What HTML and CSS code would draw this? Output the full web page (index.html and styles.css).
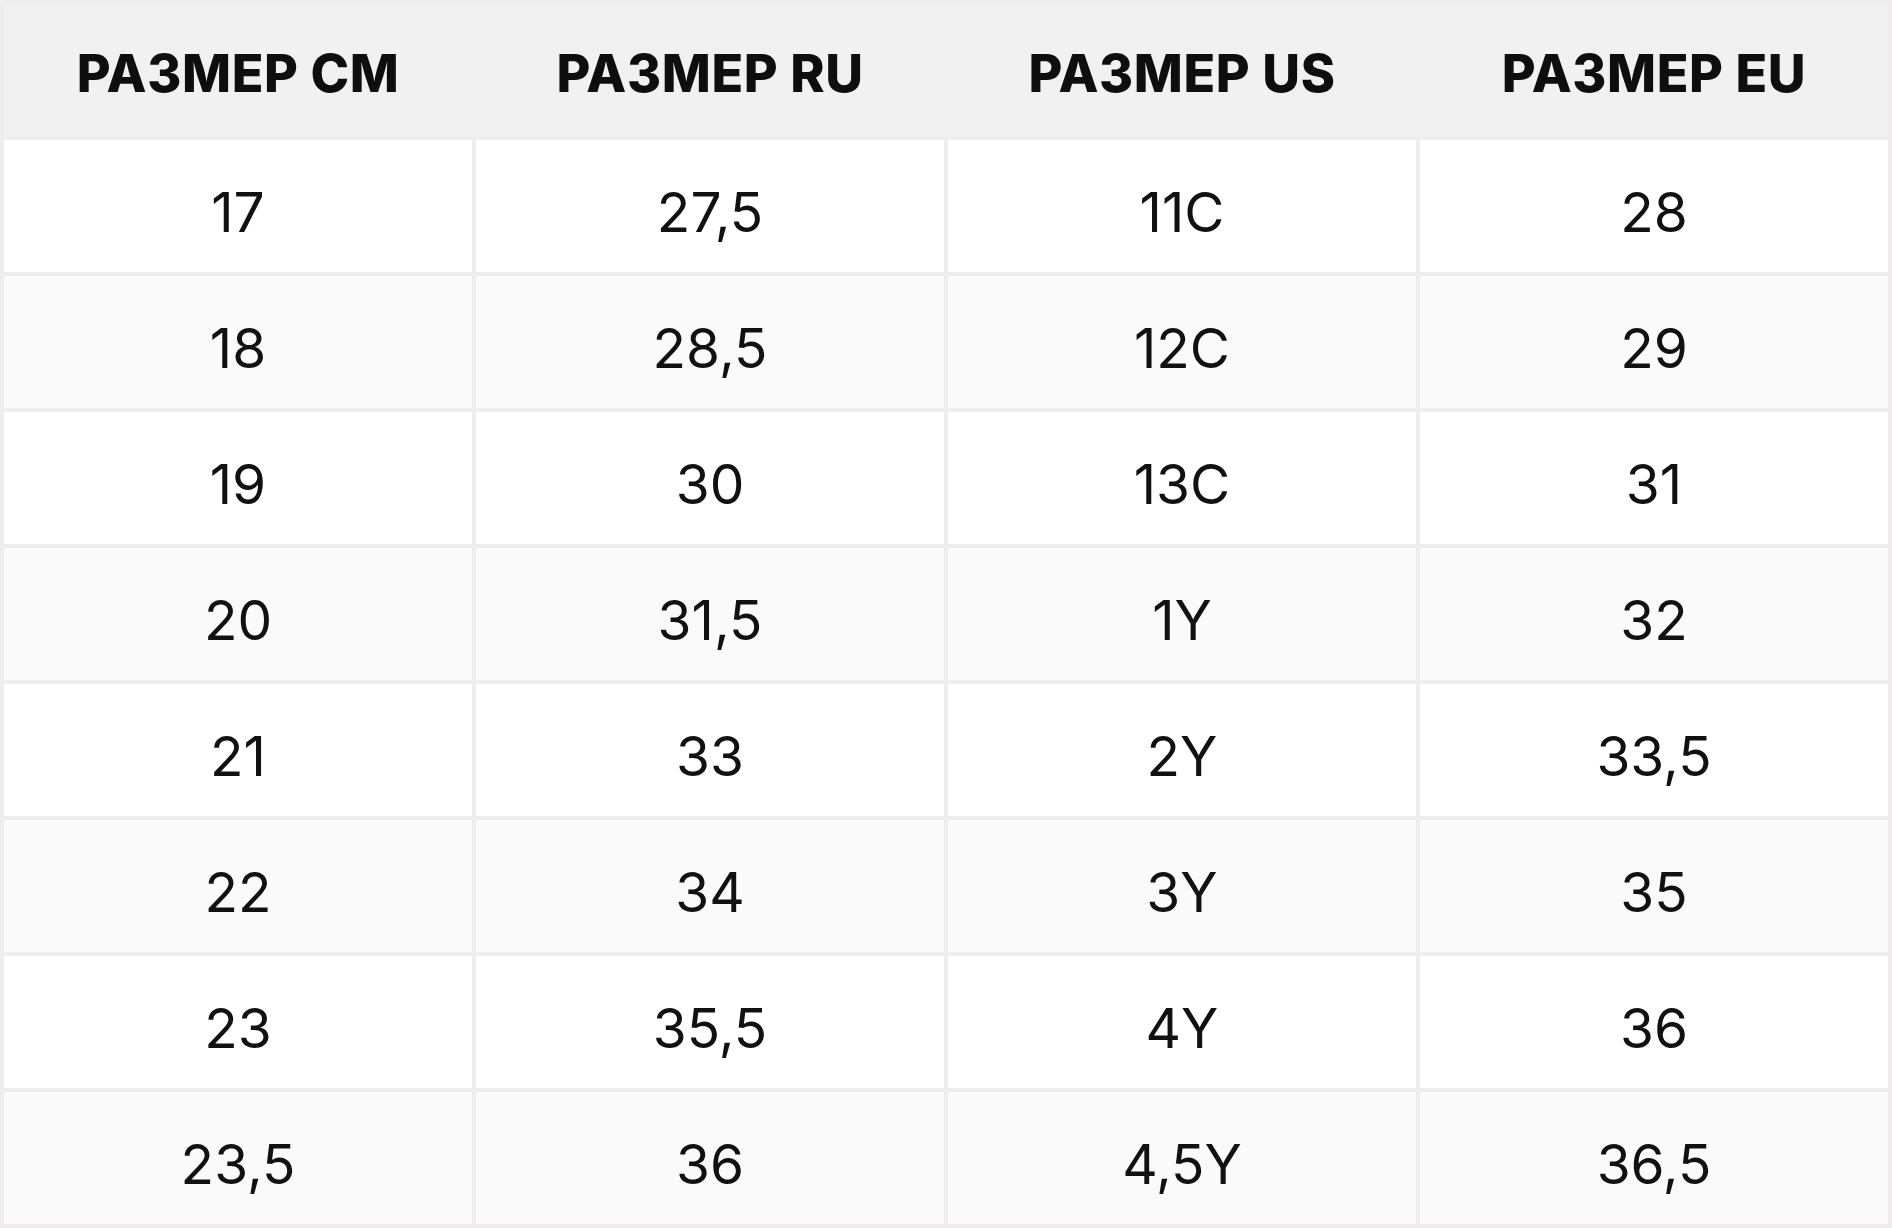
FILE: index.html
```html
<!DOCTYPE html>
<html lang="ru">
<head>
<meta charset="utf-8">
<title>Таблица размеров</title>
<link rel="stylesheet" href="styles.css">
</head>
<body>
<div class="size-table">
  <div class="head">
    <div class="hcell">РАЗМЕР CM</div>
    <div class="hcell">РАЗМЕР RU</div>
    <div class="hcell">РАЗМЕР US</div>
    <div class="hcell">РАЗМЕР EU</div>
  </div>
  <div class="row">
    <div class="cell">17</div><div class="cell">27,5</div><div class="cell">11C</div><div class="cell">28</div>
  </div>
  <div class="row alt">
    <div class="cell">18</div><div class="cell">28,5</div><div class="cell">12C</div><div class="cell">29</div>
  </div>
  <div class="row">
    <div class="cell">19</div><div class="cell">30</div><div class="cell">13C</div><div class="cell">31</div>
  </div>
  <div class="row alt">
    <div class="cell">20</div><div class="cell">31,5</div><div class="cell">1Y</div><div class="cell">32</div>
  </div>
  <div class="row">
    <div class="cell">21</div><div class="cell">33</div><div class="cell">2Y</div><div class="cell">33,5</div>
  </div>
  <div class="row alt">
    <div class="cell">22</div><div class="cell">34</div><div class="cell">3Y</div><div class="cell">35</div>
  </div>
  <div class="row">
    <div class="cell">23</div><div class="cell">35,5</div><div class="cell">4Y</div><div class="cell">36</div>
  </div>
  <div class="row alt">
    <div class="cell">23,5</div><div class="cell">36</div><div class="cell">4,5Y</div><div class="cell">36,5</div>
  </div>
</div>
</body>
</html>
```

FILE: styles.css
```css
html, body {
  margin: 0;
  padding: 0;
  background: #ffffff;
}

.size-table {
  width: 1892px;
  height: 1228px;
  box-sizing: border-box;
  padding: 4px;
  background: #eeecec;
  display: flex;
  flex-direction: column;
  gap: 4px;
}

.head,
.row {
  display: grid;
  grid-template-columns: repeat(4, 1fr);
  column-gap: 4px;
  height: 132px;
}

.head {
  background: #f1f1f1;
}

.hcell {
  display: flex;
  align-items: center;
  justify-content: center;
  font-family: "Inter", "Liberation Sans", sans-serif;
  font-weight: 800;
  font-size: 52px;
  letter-spacing: 0.6px;
  color: #0e0e0e;
  padding-top: 6px;
  box-sizing: border-box;
}

.cell {
  display: flex;
  align-items: center;
  justify-content: center;
  background: #ffffff;
  font-family: "Inter", "Liberation Sans", sans-serif;
  font-weight: 400;
  font-size: 55px;
  color: #111111;
  padding-top: 11px;
  box-sizing: border-box;
}

.row.alt .cell {
  background: #fafafa;
}
```
